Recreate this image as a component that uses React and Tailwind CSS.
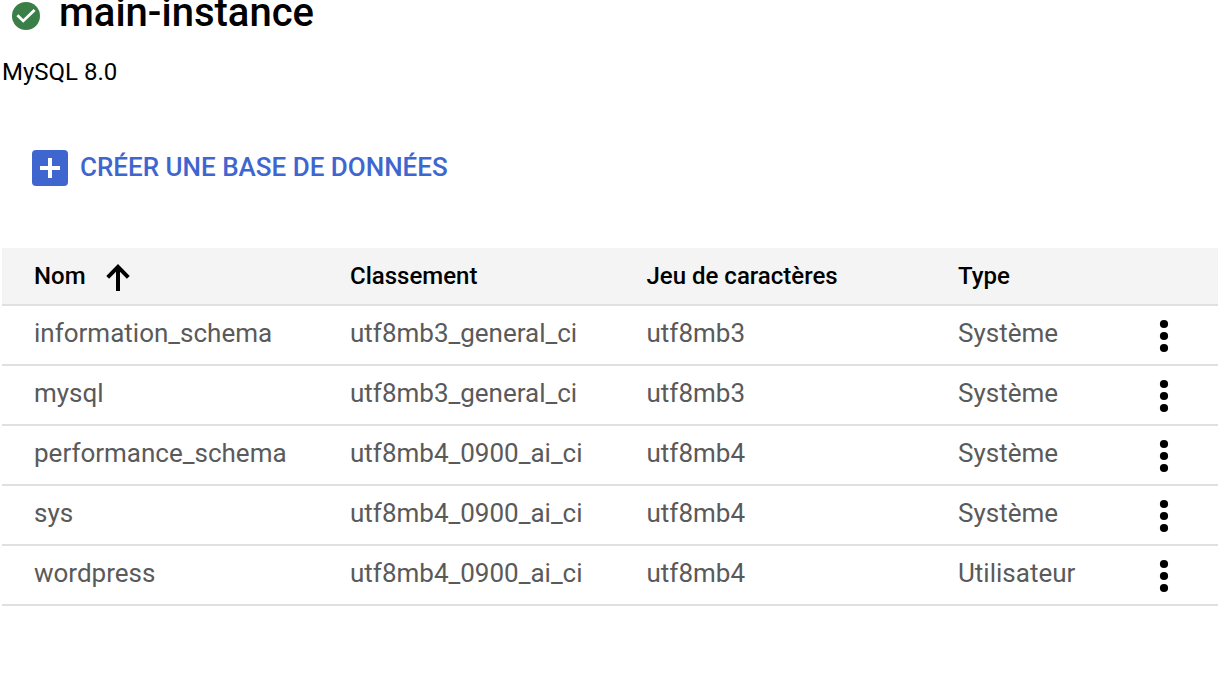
const rows = [
  ['information_schema', 'utf8mb3_general_ci', 'utf8mb3', 'Système'],
  ['mysql', 'utf8mb3_general_ci', 'utf8mb3', 'Système'],
  ['performance_schema', 'utf8mb4_0900_ai_ci', 'utf8mb4', 'Système'],
  ['sys', 'utf8mb4_0900_ai_ci', 'utf8mb4', 'Système'],
  ['wordpress', 'utf8mb4_0900_ai_ci', 'utf8mb4', 'Utilisateur'],
];

const cols = 'grid grid-cols-[316px_296.5px_311.5px_186px_1fr] pl-8 items-center';

export default function App() {
  return (
    <main className="h-[692px] w-[1218px] overflow-hidden bg-white font-[Roboto,sans-serif] text-black">
      <header className="flex h-[54px] items-start pl-3">
        <svg className="mt-[2px] h-7 w-7 shrink-0" viewBox="0 0 28 28">
          <circle cx="14" cy="14" r="14" fill="#3a7f48" />
          <path d="M5.4 13.3l5.8 5.6L22.6 8" fill="none" stroke="#fff" strokeWidth="2.8" />
        </svg>
        <h1 className="-mt-[11px] ml-[19px] text-[40px] leading-[48px] font-medium whitespace-nowrap">main-instance</h1>
      </header>
      <p className="h-[96px] pl-[2px] text-[24px] leading-9">MySQL 8.0</p>
      <button className="ml-8 flex h-9 items-center gap-3 text-[#3f66cf]">
        <svg className="h-9 w-9" viewBox="0 0 36 36">
          <rect width="36" height="36" rx="4" fill="#3f66cf" />
          <path d="M18 8v20M8 18h20" stroke="#fff" strokeWidth="4" />
        </svg>
        <span className="-mt-[2px] text-[26px] leading-9 font-medium whitespace-nowrap">CRÉER UNE BASE DE DONNÉES</span>
      </button>
      <section className="mt-[62px] ml-[2px]">
        <div className={cols + ' h-[58px] border-b-2 border-[#e0e0e0] bg-[#f4f4f4] text-[24px] font-medium'}>
          <div className="flex items-center gap-5">
            <span>Nom</span>
            <svg className="mt-[2px] h-7 w-6" viewBox="0 0 24 28">
              <path d="M12 28V4M1.7 14.4L12 3.9l10.3 10.5" fill="none" stroke="#000" strokeWidth="4" />
            </svg>
          </div>
          <span>Classement</span>
          <span>Jeu de caractères</span>
          <span>Type</span>
        </div>
        {rows.map((row) => (
          <div key={row[0]} className={cols + ' h-[60px] border-b-2 border-[#e0e0e0] text-[26px] text-[#5a5a5a]'}>
            {row.map((cell, i) => (
              <span key={i} className="-mt-1">{cell}</span>
            ))}
            <svg className="mt-[2px] ml-4 h-8 w-2 overflow-visible text-black" viewBox="0 0 8 32" fill="currentColor">
              <circle cx="4" cy="4" r="4.1" />
              <circle cx="4" cy="16" r="4.1" />
              <circle cx="4" cy="28" r="4.1" />
            </svg>
          </div>
        ))}
      </section>
    </main>
  );
}
